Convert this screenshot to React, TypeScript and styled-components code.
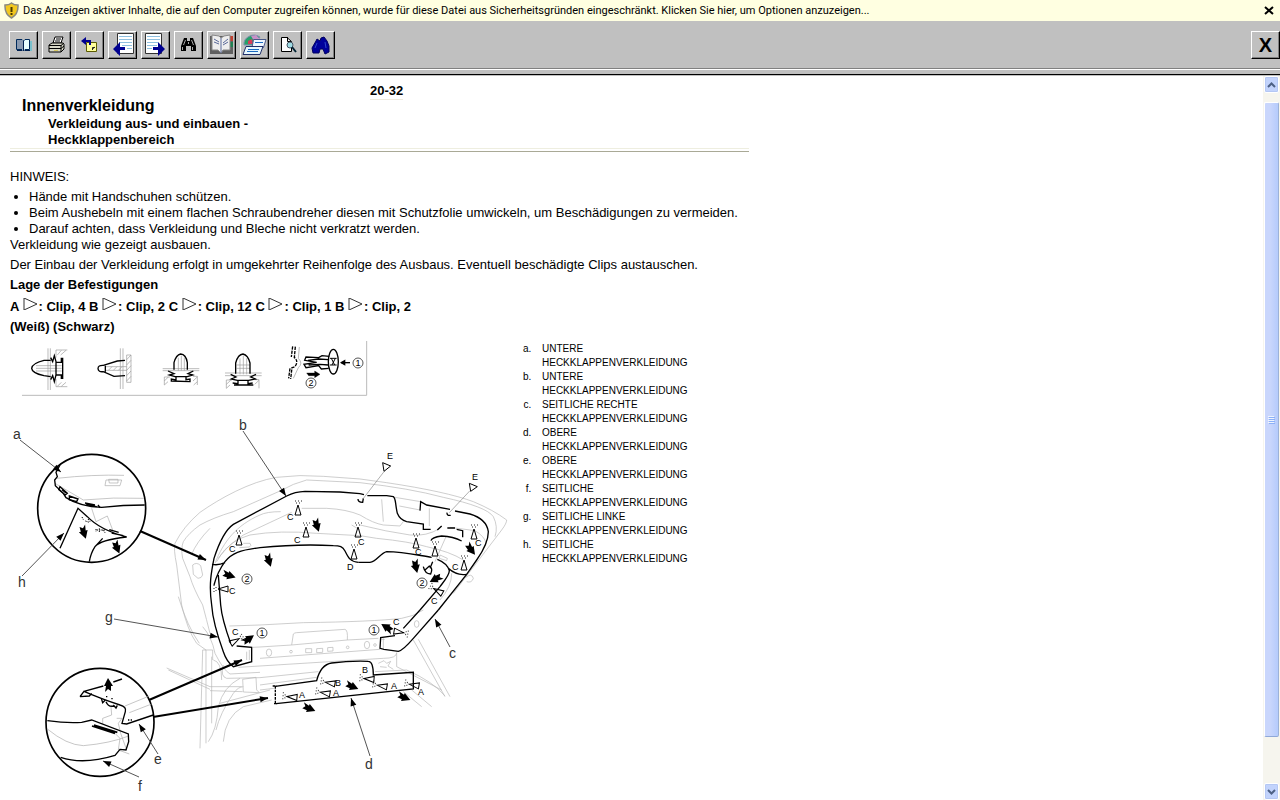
import React from "react";
import styled, { createGlobalStyle } from "styled-components";

const GlobalStyle = createGlobalStyle`
  * { box-sizing: border-box; }
  body { margin: 0; background: #fff; color: #000; font-family: "Liberation Sans", Arial, sans-serif; }
`;

const Page = styled.div`
  display: flex;
  flex-direction: column;
  height: 100vh;
  overflow: hidden;
`;

const InfoBar = styled.div`
  display: flex;
  align-items: center;
  justify-content: space-between;
  height: 21px;
  padding: 0 6px 0 4px;
  background: #ffffe1;
`;

const InfoMessage = styled.button`
  display: flex;
  align-items: center;
  gap: 4px;
  padding: 0;
  border: 0;
  background: none;
  font: 11px/21px Roboto, Tahoma, sans-serif;
  white-space: nowrap;
`;

const InfoClose = styled.button`
  display: flex;
  padding: 0;
  border: 0;
  background: none;
`;

const Toolbar = styled.div`
  display: flex;
  justify-content: space-between;
  padding: 10px 0 9px 9px;
  background: #c0c0c0;
  border-bottom: 1px solid #808080;
`;

const ToolGroup = styled.div`
  display: flex;
  gap: 4px;
`;

const ToolButton = styled.button`
  display: flex;
  align-items: center;
  justify-content: center;
  width: 29px;
  height: 28px;
  padding: 0;
  background: #c0c0c0;
  border: 1px solid;
  border-color: #fff #000 #000 #fff;
  box-shadow: inset -1px -1px 0 #808080;
  font: bold 20px/24px "Liberation Sans", Arial, sans-serif;
`;

const Divider = styled.div`
  flex: none;
  height: 7px;
  background: #c0c0c0;
  border-top: 1px solid #fff;
  border-bottom: 1px solid #c0c0c0;
  box-shadow: inset 0 -1px 0 #000;
`;

const Body = styled.div`
  display: flex;
  flex: 1;
  min-height: 0;
`;

const Content = styled.main`
  flex: 1;
  min-width: 0;
  overflow: hidden;
  padding: 7px 10px 0;
  font-size: 13px;
  line-height: 16px;
`;

const Article = styled.article`
  max-width: 739px;
`;

const Header = styled.header`
  display: grid;
  grid-template-columns: 360px 1fr;
  align-items: start;
  padding-bottom: 2px;
  border-bottom: 1px solid #a9a996;
`;

const Titles = styled.div`
  grid-column: 1 / -1;
  padding-left: 12px;
  margin-top: -4px;
  border-bottom: 1px solid #eeeee0;
`;

const PageNumber = styled.strong`
  grid-column: 2;
  justify-self: start;
  border-bottom: 1px solid #eeeade;
`;

const Title = styled.h1`
  margin: 0;
  font-size: 16px;
  line-height: 20px;
`;

const Subtitle = styled.h2`
  max-width: 260px;
  margin: 0 0 0 26px;
  font-size: 13px;
  line-height: 16px;
`;

const Note = styled.p<{ $bold?: boolean; $gap?: number }>`
  margin: ${(p) => p.$gap ?? 4}px 0 0;
  font-weight: ${(p) => (p.$bold ? "bold" : "normal")};
`;

const Hints = styled.ul`
  margin: 4px 0 0;
  padding-left: 19px;
`;

const TriangleGlyph = styled.svg`
  display: inline-block;
  width: 16px;
  height: 12px;
  vertical-align: 1px;
`;

const Figure = styled.div`
  display: flex;
  align-items: flex-start;
  margin-top: 5px;
`;

const Drawing = styled.svg`
  flex: none;
  width: 500px;
  height: 460px;
  font-family: "Liberation Sans", Arial, sans-serif;
`;

const Legend = styled.ol`
  list-style: lower-alpha;
  width: 190px;
  margin: 2px 0 0;
  padding-left: 24px;
  font-size: 10px;
  line-height: 14px;
`;

const LegendItem = styled.li`
  padding-left: 8px;
`;

const Scrollbar = styled.div`
  display: flex;
  flex-direction: column;
  flex: none;
  width: 17px;
  padding: 0 1px;
  background: #f6f5ee;
`;

const ScrollArrow = styled.button`
  display: flex;
  flex: none;
  align-items: center;
  justify-content: center;
  width: 15px;
  height: 17px;
  padding: 0;
  border: 1px solid #fff;
  border-radius: 2px;
  background: #c2d3fc;
  box-shadow: inset 0 0 0 1px #b4c7f4;
`;

const Track = styled.div`
  display: flex;
  flex: 1;
  min-height: 0;
  padding: 9px 0 46px;
`;

const Thumb = styled.div`
  display: flex;
  flex: 1;
  align-items: center;
  justify-content: center;
  border: 1px solid #fff;
  border-bottom-color: #8fa8d8;
  border-right-color: #9cb2d8;
  border-radius: 2px;
  background: linear-gradient(90deg, #c9d6fc 40%, #b5cbfc);
`;

const Tri = () => (
  <TriangleGlyph viewBox="0 0 16 12" aria-hidden="true">
    <path d="M1 0 L14 6 L1 12 Z" fill="none" stroke="#333" />
  </TriangleGlyph>
);

const toolIcons: { label: string; art: React.ReactNode }[] = [
  {
    label: "Handbuch",
    art: (
      <>
        <path d="M5.500 6.500 H11 L12.500 8 L14 6.500 H18.500 V16.500 H14 L12.500 18 L11 16.500 H5.500 Z" fill="#e8ffff" stroke="#002a5b" />
        <path d="M6 7 H11 L12 8 V17 L11 16 H6 Z" fill="#8a9ab0" />
        <path d="M12.500 8 V18 M6 17.500 H11 M14 17.500 H19" stroke="#002050" fill="none" />
        <path d="M20 8 V18" stroke="#35c0d8" />
      </>
    ),
  },
  {
    label: "Drucken",
    art: (
      <>
        <path d="M9 10 L11 4 H19 L17 10 Z" fill="#fff" stroke="#000" />
        <path d="M12 6 H17 M11 8 H16" stroke="#000" />
        <path d="M5 12 L8 10 H19 L20 11 V16 L17 19 H5 Z" fill="#d8d8c8" stroke="#000" />
        <path d="M5 12.500 H17 L20 10 M5 15.500 H17 L20 13 M17 12 V19" stroke="#000" fill="none" />
        <path d="M10 17.500 H14" stroke="#d8c860" />
      </>
    ),
  },
  {
    label: "Zurück",
    art: (
      <>
        <path d="M9.500 9.500 H19.500 V18.500 H9.500 Z" fill="#ffff9c" stroke="#5a5a00" />
        <path d="M15.500 17 V14.500 H18 M15.500 16 L18 14" stroke="#222" fill="none" />
        <path d="M4 8 L9 4 V7 H14 V12 H12 V9 H9 V12 Z" fill="#000090" />
      </>
    ),
  },
  {
    label: "Vorherige Seite",
    art: (
      <>
        <path d="M7.500 0.500 H23.500 V20.500 H7.500 Z" fill="#fff" stroke="#333" />
        <path d="M9 3.500 H22 M9 6.500 H22 M9 9.500 H22 M12 12.500 H22 M17 15.500 H22" stroke="#8fc0e0" />
        <path d="M3 16 L10 9 V14 H15 V17 H10 V23 Z" fill="#000090" />
      </>
    ),
  },
  {
    label: "Nächste Seite",
    art: (
      <>
        <path d="M2.500 0.500 H18.500 V20.500 H2.500 Z" fill="#fff" stroke="#333" />
        <path d="M4 3.500 H17 M4 6.500 H17 M4 9.500 H15 M4 12.500 H14 M4 15.500 H9" stroke="#8fc0e0" />
        <path d="M22 16 L15 9 V14 H10 V17 H15 V23 Z" fill="#000090" />
      </>
    ),
  },
  {
    label: "Suchen",
    art: (
      <>
        <path d="M8 5 H11 V8 H14 V5 H17 L20 13 V18 H15 V13 H10 V18 H5 V13 Z" fill="#000" />
        <path d="M9.500 7 L7.500 12 M6.500 14 V17 M15.500 7 L17.500 12 M12.500 9 V11 M16.500 14 V17" stroke="#a8a8a8" fill="none" />
      </>
    ),
  },
  {
    label: "Inhaltsverzeichnis",
    art: (
      <>
        <path d="M1 3 H24 V21 H1 Z" fill="#606060" />
        <path d="M21 3 H24 V8 H21 Z" fill="#c04030" />
        <path d="M21 9 H24 V14 H21 Z" fill="#208050" />
        <path d="M3 2 L10 3 L12 5 L15 3 L21 2 V17 L14 17 L12 20 L9 17 L3 17 Z" fill="#eee" stroke="#888" />
        <path d="M12 5 V20 M5 6 L10 9 M5 9 L10 11 M14 10 L19 6 M14 12 L19 9" stroke="#5b6a9a" fill="none" />
      </>
    ),
  },
  {
    label: "Dokumente",
    art: (
      <>
        <path d="M2 12 A10 9 0 0 1 18 4 L13 12 Z" fill="#25a06a" stroke="#8090b0" />
        <path d="M9 3 L14 2 L18 6 L12 8 Z" fill="#c890c8" />
        <path d="M6 8 L10 6 L11 11 H6 Z" fill="#d83c58" />
        <path d="M11.500 6.500 H24 L21.500 14.500 H10 Z" fill="#eef6ff" stroke="#4a5a8a" />
        <path d="M4 13.500 H21 L18 21.500 H1 Z" fill="#e8f8ff" stroke="#20306a" />
        <path d="M13 9.500 H21 M6 16.500 H17 M5 18.500 H16" stroke="#1a6ac0" />
      </>
    ),
  },
  {
    label: "Seitenansicht",
    art: (
      <>
        <path d="M6.500 4.500 H12 L16.500 8.500 V18.500 H6.500 Z" fill="#fff" stroke="#000" />
        <path d="M12.500 4 V8.500 H16" fill="none" stroke="#000" />
        <circle cx="15" cy="12" r="3" fill="#9edce4" stroke="#456" />
        <path d="M17 14 L21 19" stroke="#023" strokeWidth="2" />
      </>
    ),
  },
  {
    label: "Weitersuchen",
    art: (
      <>
        <path d="M4 15 L8 8 L9 6 L12 8 L13 5 L16 4 L19 8 L21 13 V19 L17 21 L15 16 L12 16 L11 20 L5 20 Z" fill="#00009c" stroke="#000060" />
        <path d="M9 10 L7 15 M17 9 L18 15" stroke="#3048c8" />
      </>
    ),
  },
];

const legend = [
  "UNTERE HECKKLAPPENVERKLEIDUNG",
  "UNTERE HECKKLAPPENVERKLEIDUNG",
  "SEITLICHE RECHTE HECKKLAPPENVERKLEIDUNG",
  "OBERE HECKKLAPPENVERKLEIDUNG",
  "OBERE HECKKLAPPENVERKLEIDUNG",
  "SEITLICHE HECKKLAPPENVERKLEIDUNG",
  "SEITLICHE LINKE HECKKLAPPENVERKLEIDUNG",
  "SEITLICHE HECKKLAPPENVERKLEIDUNG",
];

type LeaderLine = [number, number, number, number, boolean?];

const leaders: LeaderLine[] = [
  [20, 440, 61, 472],
  [22, 576, 64, 533],
  [243, 431, 286, 496],
  [450, 647, 435, 619],
  [370, 756, 351, 698],
  [158, 754, 139, 724],
  [139, 777, 103, 761],
  [114, 619, 218, 637],
  [140, 531, 206, 560, true],
  [149, 700, 242, 660, true],
  [153, 717, 268, 698, true],
];

const Leader = ({ line: [x1, y1, x2, y2, bold] }: { line: LeaderLine }) => {
  const angle = (Math.atan2(y2 - y1, x2 - x1) * 180) / Math.PI;
  return (
    <>
      <line x1={x1} y1={y1} x2={x2} y2={y2} stroke={bold ? "#000" : "#555"} strokeWidth={bold ? 2 : 1} />
      <path d="M0 0 L-8 -3 L-8 3 Z" transform={`translate(${x2} ${y2}) rotate(${angle})`} />
    </>
  );
};

/* x, y, direction in degrees */
const blockArrows = [
  [269, 560, 75], [317, 525, 75], [229, 575, 20], [416, 566, 80], [436, 579, 155],
  [471, 549, 55], [248, 639, -32], [387, 628, -145], [352, 686, 25], [309, 708, 25],
  [404, 697, 25], [108, 685, -90], [84, 532, 75], [117, 547, 70],
];

/* x, y, direction in degrees */
const clipMarks = [
  [239, 540, 0], [298, 510, 0], [306, 532, 0], [358, 532, 0], [416, 543, 0], [435, 551, 0],
  [474, 534, 0], [464, 565, 0], [354, 554, 0], [223, 589, -90], [438, 591, -60], [235, 641, 60],
  [399, 632, 100], [292, 697, -85], [330, 683, -80], [325, 693, -80], [369, 679, -85],
  [382, 686, -80], [414, 685, -80],
];

const clipLabels: [string, number, number][] = [
  ["C", 229, 552], ["C", 287, 520], ["C", 294, 543], ["C", 358, 545], ["D", 347, 570],
  ["C", 229, 594], ["C", 415, 555], ["C", 475, 546], ["C", 452, 570], ["C", 431, 604],
  ["C", 232, 635], ["C", 393, 625], ["A", 299, 698], ["B", 335, 686], ["A", 333, 696],
  ["B", 362, 673], ["A", 391, 689], ["A", 418, 695], ["E", 387, 459], ["E", 472, 480],
];

const partLabels: [string, number, number][] = [
  ["a", 13, 439], ["b", 239, 430], ["c", 449, 658], ["d", 365, 769],
  ["e", 154, 764], ["f", 138, 791], ["g", 105, 622], ["h", 18, 587],
];

const steps: [string, number, number][] = [
  ["1", 358, 363], ["2", 311, 383], ["2", 247, 579], ["2", 422, 583], ["1", 262, 633], ["1", 374, 630],
];

const ClipStrip = () => (
  <g transform="translate(10 335) scale(0.33333)" fill="none" stroke="#000" strokeWidth="4">
    <path d="M36 181 H1070 V18" stroke="#bbb" strokeWidth="3" />
    <g stroke="#999" strokeWidth="2">
      <path d="M114 40 V165 M121 40 V165 M78 92 H155 M78 100 H155 M78 108 H155" />
      <path d="M138 68 V45 H172 M142 60 L154 46 M152 60 L168 46 M138 132 V155 H172 M142 154 L154 142 M154 154 L168 142" />
      <path d="M331 40 V162 M339 40 V162 M350 60 H363 V142 H350 Z M350 74 L363 60 M350 90 L363 76 M350 106 L363 92 M350 122 L363 108 M350 138 L363 124" />
      <path d="M288 95 H350 M288 106 H350 M295 106 L306 95 M310 106 L321 95 M325 106 L336 95" />
      <path d="M458 101 H568 M458 107 H568 M645 114 H755 M645 122 H755" />
      <path d="M505 68 V107 M514 62 V107 M523 68 V107 M690 70 V118 M700 62 V118 M710 70 V118 M680 90 H720 M680 100 H720" />
      <path d="M463 150 V126 H480 M463 138 L475 126 M463 150 L474 140 M549 124 H562 V150 M549 138 L562 126 M551 150 L562 140" />
      <path d="M649 160 V135 H666 M649 148 L662 136 M649 160 L660 150 M734 134 H747 V160 M734 148 L747 136" />
      <path d="M868 36 L865 70 Q880 85 865 98 L850 130" />
    </g>
    <path d="M122 76 H102 Q66 85 65 100 Q66 114 102 122 L122 125" />
    <path d="M122 68 L128 80 L133 62 L138 80 V120 L133 140 L128 122 L122 134 M138 82 H154 V68 M158 68 V132 M138 120 H154 V132" />
    <path d="M345 76 L322 78 L280 91 Q264 90 264 101 Q265 112 280 110 L312 124 L345 122 M286 92 V110" />
    <path d="M492 104 V83 Q498 60 512 57 Q528 58 532 83 V104" />
    <path d="M474 108 L492 116 L478 120 L495 125 H532 L548 120 L534 116 L550 108 M498 125 V135 L484 132 V138 L540 140 V132 L528 134 V125" />
    <path d="M677 116 V84 Q684 58 699 57 Q714 60 720 84 V116" />
    <path d="M662 118 L678 126 L664 132 L682 136 H716 L736 132 L722 126 L738 118 M684 138 V146 L668 144 M672 150 H730 M728 144 L714 146 V138" />
    <path d="M856 35 L853 68 Q862 74 860 84 Q858 96 846 98 L842 132 M848 34 L844 66 M840 100 L836 130" strokeDasharray="10 3" />
    <path d="M958 64 L936 62 L926 68 L888 66 L884 76 L920 82 L882 88 L888 98 L926 92 L934 102 L956 100 M894 76 L926 72 L955 74 M896 90 L930 88 L955 90" />
    <ellipse cx="970" cy="80" rx="15" ry="37" />
    <path d="M960 70 H980 M960 90 H980 M964 70 L974 90 M976 70 L966 90" strokeWidth="3" />
    <path d="M1020 83 H994" />
    <path d="M994 83 L1004 77 V89 Z" fill="#000" />
    <path d="M890 114 H914 V108 L930 118 L914 128 V122 H896 Z" fill="#000" strokeWidth="1" />
  </g>
);

const Tailgate = () => (
  <g fill="none" stroke="#000" strokeWidth="4">
    <g transform="translate(0 415) scale(0.33333)" stroke="#b5b5b5" strokeWidth="2">
      <path d="M600 292 Q550 335 525 385 Q520 400 530 450 L545 570 M600 330 Q565 355 550 380 Q542 400 548 430 L570 485 Q580 520 608 570 M630 340 Q590 380 574 420" />
      <path d="M578 450 Q590 440 602 452 L608 480 Q605 490 594 490 L580 478 Z" />
    </g>
    <g transform="translate(200 415) scale(0.33333)">
      <g stroke="#b5b5b5" strokeWidth="2">
        <path d="M0 292 C60 250 150 200 230 187 Q300 178 370 184 L480 192 M0 330 Q40 308 100 290 L240 228 Q280 205 320 195 L480 203" />
        <path d="M45 445 C70 380 110 330 180 300 Q200 290 242 290 M50 440 Q70 400 130 360 L275 292 M305 280 H380 Q440 283 480 300 M55 430 Q90 375 150 360 Q240 345 350 355 L480 362" />
        <path d="M130 385 L150 385 Q156 392 148 396 L118 398 M455 330 Q480 345 480 346" />
      </g>
      <path d="M35 570 C26 510 34 470 42 430 C55 390 75 345 100 328 L260 243 Q285 230 315 229 L420 231 L480 236" />
      <path d="M62 570 L55 480 M42 510 C50 480 60 460 75 440 C95 415 120 405 180 398 C250 391 330 388 400 392 C420 392 428 395 435 408 C445 428 450 440 475 442 M36 448 Q55 452 75 443" />
      <path d="M474 252 Q474 262 488 262 L490 250" />
    </g>
    <g transform="translate(360 440) scale(0.33333)">
      <g stroke="#b5b5b5" strokeWidth="2">
        <path d="M0 117 L80 128 Q260 155 340 185 Q400 210 440 240 Q440 250 425 270 L280 460 M0 128 Q150 145 250 172 Q380 200 400 230 Q415 260 405 290" />
        <path d="M0 225 Q40 250 70 255 L120 258 L130 245 M0 255 Q80 275 150 285 Q200 290 240 265 M0 287 L50 295 Q150 305 200 320 Q270 335 310 360" />
        <path d="M65 178 L70 245 M105 172 L182 185 M118 198 L180 210 M208 205 V258 M270 262 L345 272 Q375 290 378 310 M258 290 L225 365" />
        <path d="M240 345 L262 355 L260 362 L238 355 Z M275 400 Q275 440 240 480 M318 412 Q335 398 340 415 Q335 430 320 425" />
        <path d="M8 178 L72 95 M268 218 L330 152" stroke="#888" />
      </g>
      <path d="M0 161 L12 164 M22 167 H80 L100 170 C108 175 105 190 112 220 Q120 240 140 245 L190 252 V268 H212 M180 212 L182 185 L200 195 L270 208 M285 213 L330 222 Q380 237 385 275 Q385 310 350 360 L320 403 L235 510" />
      <path d="M-5 367 H30 C50 365 60 340 80 335 C130 335 170 345 215 352 M232 358 Q262 370 268 392 C268 405 255 420 240 440 L180 510 M265 385 Q290 408 320 403" />
      <path d="M232 270 L245 258 M262 264 L285 264 M290 268 L308 272 V292 M213 302 Q215 292 245 288 Q280 290 305 303" />
      <path d="M261 218 Q260 228 272 226 M218 365 L210 385 M190 380 Q195 402 212 402 Q220 385 208 378 L195 390" />
      <path d="M68 68 L92 78 L72 94 Z M328 130 L352 140 L332 154 Z" strokeWidth="3" />
    </g>
    <g transform="translate(100 590) scale(0.33333)">
      <g stroke="#b5b5b5" strokeWidth="2">
        <path d="M245 45 Q262 120 290 160 L318 180 V460 M235 20 Q262 110 298 160 M308 45 Q320 90 330 130 M300 475 L308 180 H338 V210 M335 200 V400" />
        <path d="M200 234 L330 290 M205 240 L330 298 M330 290 H425 M330 302 L428 305 M325 455 Q350 420 355 350 Q370 290 420 265 M370 455 Q375 380 430 350 L515 330 M348 420 Q360 370 400 310 Q415 290 430 290" />
        <path d="M308 110 Q335 140 345 190 Q370 240 390 252 L480 247 M370 225 Q360 260 380 265 L480 263 M428 268 L468 262 L470 300 L478 308 L430 306 Z M388 108 L480 105 M458 172 L480 171 M340 210 Q365 215 365 270 M415 232 L480 228" />
        <path d="M440 185 V210 M448 180 V210 M360 340 L510 300" />
      </g>
      <path d="M335 45 C338 90 350 130 370 185 Q380 215 400 230 L455 215 V172 L410 168 M362 45 C365 80 374 110 392 160" />
    </g>
    <g transform="translate(260 590) scale(0.33333)">
      <g stroke="#b5b5b5" strokeWidth="2">
        <path d="M0 105 L130 98 Q340 95 425 85 Q460 80 490 60 M95 165 L100 132 Q104 128 110 128 L255 118 Q264 120 262 150 L95 165 M0 171 L95 165 M262 150 L355 145 M0 205 L360 178" />
        <path d="M0 228 L370 205 Q410 205 410 188 V230 M0 263 L175 245 M0 285 L170 262 M0 300 L42 295 M460 150 L555 320 M475 148 L570 320 M345 245 L440 240 Q520 275 555 318 M410 230 L545 300 M455 300 L515 350 M430 305 L485 350" />
        <path d="M355 220 L372 212 L380 220 L392 214 L384 228 L400 238 M360 230 L380 232 M137 176 H155 V188 H137 Z M170 176 L188 175 V187 L170 188 Z M203 173 L219 172 V183 L203 184 Z" />
        <ellipse cx="27" cy="188" rx="8" ry="11" />
        <ellipse cx="321" cy="165" rx="8" ry="11" />
        <ellipse cx="470" cy="102" rx="7" ry="10" />
        <circle cx="93" cy="185" r="4" />
        <circle cx="263" cy="172" r="4" />
        <circle cx="345" cy="165" r="4" />
        <path d="M370 145 V175 M364 148 H374" />
      </g>
      <path d="M480 60 L430 115 M535 60 L460 145 Q430 180 415 184 L372 178 L360 175 L362 143 L405 137" />
      <path d="M46 289 L170 272 Q182 224 215 219 Q270 212 325 214 Q340 214 340 255 L460 247 V297 L48 341" />
      <path d="M38 288 H50 M42 341 H52 M46 288 V341" strokeDasharray="8 3" />
    </g>
  </g>
);

const DetailCircles = () => (
  <g fill="none" stroke="#000" strokeWidth="4">
    <g transform="translate(0 415) scale(0.33333)">
      <circle cx="275" cy="280" r="162" strokeWidth="5" />
      <g stroke="#aaa" strokeWidth="2">
        <path d="M170 190 Q280 178 372 181 M165 205 L250 255 Q340 246 432 250 M318 195 L365 195 L360 212 L315 212 Z M326 193 H354 V204 H328 Z M275 280 L288 320 L322 303 L338 345" />
      </g>
      <path d="M180 150 L168 172 L172 185 L164 195 L166 212 L190 235 L198 248 Q240 275 305 277 Q370 270 434 270" />
      <path d="M180 215 L202 235 L196 240 L176 224 Z M186 224 L198 234 M208 243 L234 252 L230 260 L208 254 Z M255 264 L285 270 M258 269 L290 275 M294 270 L300 278" />
      <path d="M180 400 L234 280 L262 305 Q300 345 380 366 Q300 375 285 395 Q272 415 268 440 M308 370 L285 395 M328 344 L356 352 M335 354 L370 362" />
      <path d="M246 306 L250 314 M256 318 L268 322 M264 312 L270 320 M288 342 V350 M298 340 V352 M308 345 L316 354 M290 345 L316 345" strokeWidth="3" strokeDasharray="4 3" />
    </g>
    <g transform="translate(0 650) scale(0.33333)">
      <circle cx="300" cy="217" r="162" strokeWidth="5" />
      <g stroke="#aaa" strokeWidth="2">
        <path d="M142 237 Q200 285 250 287 Q330 280 386 258 M333 170 L335 195 L308 205 V222 M345 250 L360 265 L355 300 L388 312 M350 205 H366 L355 220 L362 250 L380 300 M375 168 L448 138 M388 188 L455 162" />
      </g>
      <path d="M240 140 L252 124 Q300 145 360 165 Q380 170 376 185 L366 220 L380 222 L460 195 M240 140 L268 138 L275 130 M252 124 L310 108 M340 96 L366 87" />
      <path d="M304 145 L308 158 L316 150 M318 155 Q325 172 342 168 M340 165 L348 174 L352 166" />
      <path d="M142 212 Q200 220 245 217 L275 210 L385 252 L386 275 L378 300 L360 298 L345 316 Q250 345 182 322" />
      <path d="M276 228 L345 250 M282 225 L352 247" strokeWidth="5" />
      <path d="M320 138 V142 M336 144 V148 M384 210 H388 M392 210 H396" />
    </g>
  </g>
);

const App = () => (
  <Page>
    <GlobalStyle />
    <InfoBar>
      <InfoMessage type="button">
        <svg width="15" height="17" viewBox="0 0 15 17" aria-hidden="true">
          <path d="M7.500 1 Q10 3 14 3 Q14.500 12 7.500 16 Q0.500 12 1 3 Q5 3 7.500 1 Z" fill="#f2c81e" stroke="#8a8a80" strokeWidth="1.500" />
          <path d="M7.500 5 V10 M7.500 11 V13" stroke="#4a3a00" strokeWidth="2" />
        </svg>
        Das Anzeigen aktiver Inhalte, die auf den Computer zugreifen können, wurde für diese Datei aus
        Sicherheitsgründen eingeschränkt. Klicken Sie hier, um Optionen anzuzeigen...
      </InfoMessage>
      <InfoClose type="button" aria-label="Schließen">
        <svg width="10" height="9" viewBox="0 0 10 9">
          <path d="M1 1 L9 8 M9 1 L1 8" stroke="#000" strokeWidth="2" />
        </svg>
      </InfoClose>
    </InfoBar>
    <Toolbar role="toolbar">
      <ToolGroup>
        {toolIcons.map((t) => (
          <ToolButton key={t.label} type="button" aria-label={t.label}>
            <svg width="25" height="24" viewBox="0 0 25 24">{t.art}</svg>
          </ToolButton>
        ))}
      </ToolGroup>
      <ToolButton type="button" aria-label="Fenster schließen">X</ToolButton>
    </Toolbar>
    <Divider />
    <Body>
      <Content>
        <Article>
          <Header>
            <PageNumber>20-32</PageNumber>
            <Titles>
              <Title>Innenverkleidung</Title>
              <Subtitle>Verkleidung aus- und einbauen - Heckklappenbereich</Subtitle>
            </Titles>
          </Header>
          <Note $gap={17}>HINWEIS:</Note>
          <Hints>
            <li>Hände mit Handschuhen schützen.</li>
            <li>Beim Aushebeln mit einem flachen Schraubendreher diesen mit Schutzfolie umwickeln, um Beschädigungen zu vermeiden.</li>
            <li>Darauf achten, dass Verkleidung und Bleche nicht verkratzt werden.</li>
          </Hints>
          <Note $gap={0}>Verkleidung wie gezeigt ausbauen.</Note>
          <Note>Der Einbau der Verkleidung erfolgt in umgekehrter Reihenfolge des Ausbaus. Eventuell beschädigte Clips austauschen.</Note>
          <Note $bold>Lage der Befestigungen</Note>
          <Note $bold $gap={5}>
            A <Tri />: Clip, 4 B <Tri />: Clip, 2 C <Tri />: Clip, 12 C <Tri />: Clip, 1 B <Tri />: Clip, 2
          </Note>
          <Note $bold>(Weiß) (Schwarz)</Note>
          <Figure>
            <Drawing viewBox="10 340 500 460" role="img" aria-label="Heckklappenverkleidung">
              <ClipStrip />
              <Tailgate />
              <DetailCircles />
              {leaders.map((l, i) => (
                <Leader key={i} line={l} />
              ))}
              {blockArrows.map(([x, y, r], i) => (
                <path key={i} d="M-7 -3 L-1 -2 V-4 L7 0 L-1 5 V3 L-6 3 L-4 0 Z" transform={`translate(${x} ${y}) rotate(${r})`} />
              ))}
              {clipMarks.map(([x, y, r], i) => (
                <g key={i} transform={`translate(${x} ${y}) rotate(${r})`}>
                  <path d="M0 -5 L3 5 H-3 Z" fill="none" stroke="#000" />
                  <path d="M-3 -9 H4 M-2 -7 H3" stroke="#222" strokeDasharray="1 2" />
                </g>
              ))}
              {clipLabels.map(([t, x, y], i) => (
                <text key={i} x={x} y={y} fontSize="9">{t}</text>
              ))}
              {partLabels.map(([t, x, y]) => (
                <text key={t} x={x} y={y} fontSize="14" fill="#333">{t}</text>
              ))}
              {steps.map(([t, x, y], i) => (
                <g key={i}>
                  <circle cx={x} cy={y} r="5" fill="none" stroke="#555" />
                  <text x={x} y={y + 3} fontSize="9" textAnchor="middle">{t}</text>
                </g>
              ))}
            </Drawing>
            <Legend>
              {legend.map((text, i) => (
                <LegendItem key={i}>{text}</LegendItem>
              ))}
            </Legend>
          </Figure>
        </Article>
      </Content>
      <Scrollbar>
        <ScrollArrow type="button" aria-label="Nach oben">
          <svg width="9" height="6" viewBox="0 0 9 6"><path d="M1 5 L4.500 1.500 L8 5" fill="none" stroke="#4d6185" strokeWidth="2" /></svg>
        </ScrollArrow>
        <Track>
          <Thumb>
            <svg width="7" height="8" viewBox="0 0 7 8">
              <path d="M0 0.500 H6 M0 2.500 H6 M0 4.500 H6 M0 6.500 H6" stroke="#eef4fe" />
              <path d="M1 1.500 H7 M1 3.500 H7 M1 5.500 H7 M1 7.500 H7" stroke="#8cb0f8" />
            </svg>
          </Thumb>
        </Track>
        <ScrollArrow type="button" aria-label="Nach unten">
          <svg width="9" height="6" viewBox="0 0 9 6"><path d="M1 1 L4.500 4.500 L8 1" fill="none" stroke="#4d6185" strokeWidth="2" /></svg>
        </ScrollArrow>
      </Scrollbar>
    </Body>
  </Page>
);

export default App;
